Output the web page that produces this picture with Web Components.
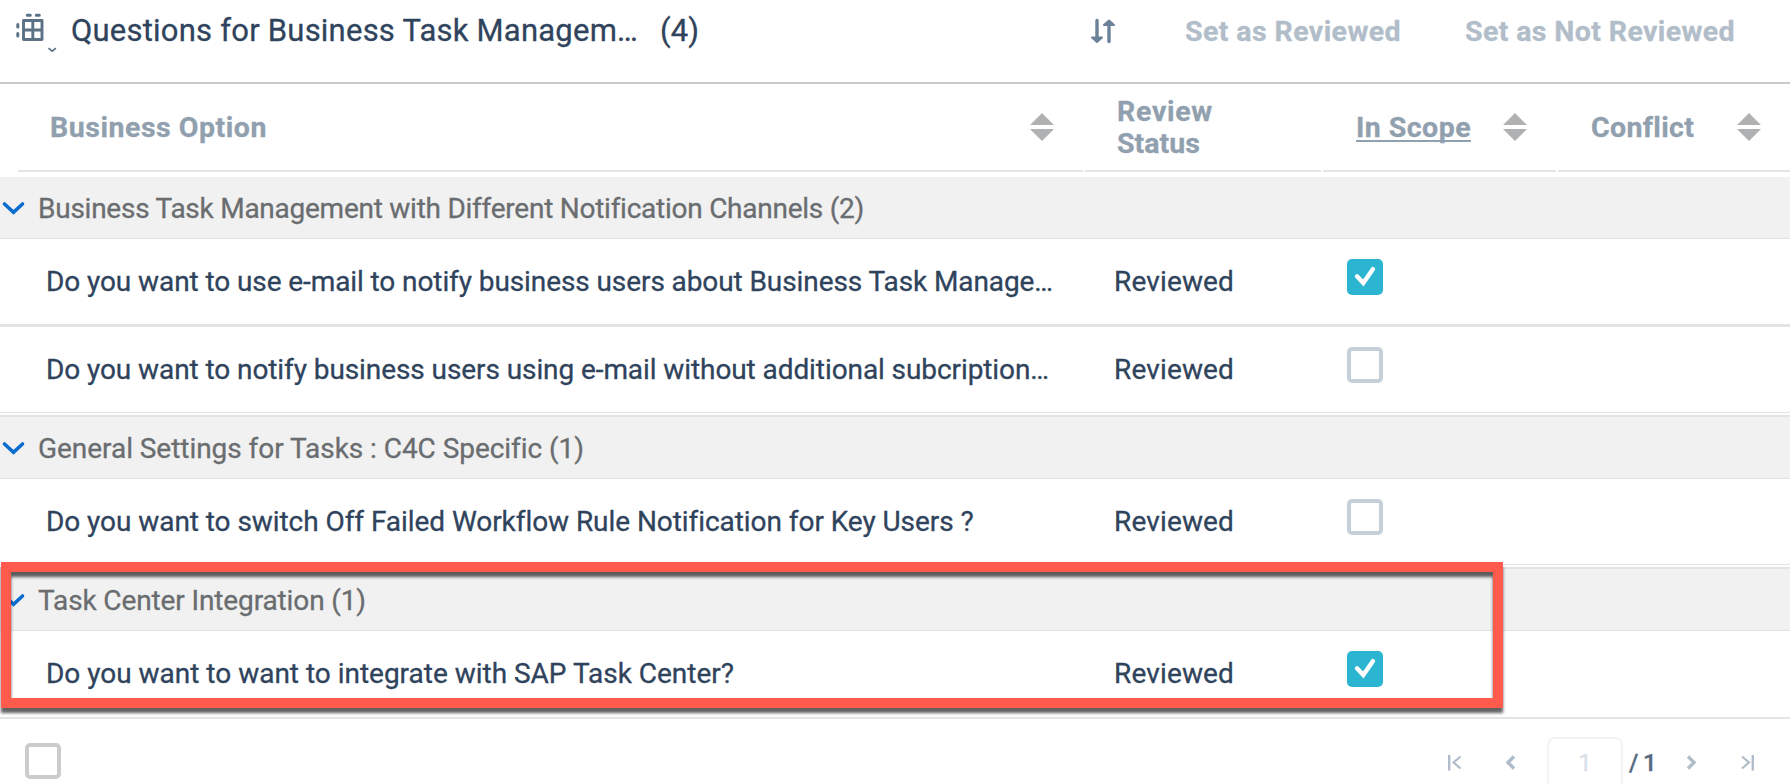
<!DOCTYPE html>
<html lang="en">
<head>
<meta charset="utf-8">
<title>Business Options</title>
<style>
html, body { margin: 0; height: 100%; overflow: hidden; background: #fff; }
body { font-family: Roboto, "Liberation Sans", sans-serif; font-size: 28px; line-height: 32px; color: #2f435c; }
</style>
</head>
<body>
<review-page></review-page>
<script>
const define = (name, html, setup) => customElements.define(name, class extends HTMLElement {
  constructor() {
    super();
    this.attachShadow({ mode: 'open' }).innerHTML = html;
  }
  connectedCallback() { if (setup) setup(this, this.shadowRoot); }
});

/* One line of text tracked out to the width given in its "w" attribute. */
define('fit-text', `<style>
  :host { display: block; white-space: pre; -webkit-text-stroke: .3px currentColor; }
  span { display: inline-block; text-decoration: var(--line, none); text-decoration-thickness: 2px; text-underline-offset: 3px; text-decoration-skip-ink: none; }
</style><span><slot></slot></span>`, (el, root) => {
  const span = root.querySelector('span');
  const n = [...el.textContent].length;
  const natural = span.getBoundingClientRect().width;
  span.style.letterSpacing = ((+el.getAttribute('w') - natural) / n) + 'px';
});

define('check-box', `<style>
  :host { display: block; box-sizing: border-box; width: 36px; height: 36px; border: 4px solid var(--box, #c5d0da); border-radius: 5px; background: #fff; }
  svg { display: none; }
  :host([checked]) { border: 0; background: #2cb5d1; }
  :host([checked]) svg { display: block; }
</style><svg width="36" height="36" viewBox="0 0 36 36"><path d="M10 17.300l6.300 6.700L26 10" fill="none" stroke="#fff" stroke-width="4.400" stroke-linecap="round"/></svg>`);

define('sort-handle', `<style>:host { display: block; width: 24px; height: 28px; } svg { display: block; }</style>
<svg width="24" height="28"><path d="M12 0L24 12H0zM0 16H24L12 28z" fill="#b0b1b2"/></svg>`);

define('title-bar', `<style>
  :host { display: flex; box-sizing: border-box; height: 84px; border-bottom: 2px solid #cacaca; padding-top: 12px; }
  .icon { margin-left: 15px; width: 56px; height: 44px; }
  .title { font-size: 31px; line-height: 37px; width: 589px; color: #2f435c; }
  .count { font-size: 31px; line-height: 37px; width: 431px; }
  .sort { width: 94px; height: 40px; }
  .btn { font-weight: 700; color: #b1bdc9; font-size: 28.5px; width: 280px; line-height: 40px; }
</style>
<svg class="icon" viewBox="15 12 56 44" fill="none" stroke="#5b7186">
  <path d="M23.500 20.500h18.500v19h-18.500zM32.800 20v20M23 30h19" stroke-width="2.900" stroke-linejoin="round"/>
  <path d="M27.300 15.200h3M36.300 15.200h3M17.800 24.500v2.500M17.800 33.500v2.500" stroke-width="3" stroke-linecap="round"/>
  <path d="M48.500 48.200l3.700 3 3.700-3" stroke-width="1.600"/>
</svg>
<fit-text class="title" w="567">Questions for Business Task Managem…</fit-text>
<fit-text class="count" w="39">(4)</fit-text>
<svg class="sort" viewBox="1091 12 94 40" fill="#6b8299" stroke="#6b8299" stroke-linecap="round" stroke-linejoin="round">
  <path d="M1097 20.500V38M1109 25V41.500" stroke-width="3.400" fill="none"/>
  <path d="M1092 37.500h10l-5 4.500zM1104 25h10l-5-4.500z" stroke-width="2"/>
</svg>
<fit-text class="btn" w="216">Set as Reviewed</fit-text>
<fit-text class="btn" w="270">Set as Not Reviewed</fit-text>`);

define('column-head', `<style>
  :host { display: flex; align-items: center; box-sizing: border-box; height: 88px; border-bottom: 2px solid #e5e5e5; color: #91a0ae; font-weight: 700; font-size: 28.500px; }
  .label { flex: 1; padding-top: 2px; }
  sort-handle { margin: 0 29px 0 0; }
  :host([underlined]) { --line: underline; }
  :host([plain]) sort-handle { display: none; }
</style><div class="label"><slot></slot></div><sort-handle></sort-handle>`);

define('group-row', `<style>
  :host { display: flex; align-items: center; box-sizing: border-box; height: 62px; background: #f1f1f1; border-bottom: 1px solid #e2e2e2; color: #6a6d70; }
  :host([ruled]) { height: 64px; border-top: 2px solid #e3e3e3; }
  svg { width: 38px; height: 20px; }
  .name { padding-top: 2px; }
</style><svg viewBox="0 0 38 20"><path d="M4.500 6l9 8.300L22.500 6" fill="none" stroke="#0a6ed1" stroke-width="3.600" stroke-linecap="round" stroke-linejoin="miter"/></svg><div class="name"><slot></slot></div>`);

define('option-row', `<style>
  :host { display: grid; grid-template-columns: 1068px 233px 36px; padding-left: 46px; height: 85px; }
  .t { line-height: 86px; }
  check-box { margin-top: 20px; }
</style><div class="t"><slot></slot></div><fit-text class="t" w="120">Reviewed</fit-text><check-box></check-box>`,
  (el, root) => root.querySelector('check-box').toggleAttribute('checked', el.hasAttribute('in-scope')));

define('page-bar', `<style>
  :host { display: flex; box-sizing: border-box; height: 65px; padding-left: 25px; font-size: 24px; color: #556b82; --box: #ccc; }
  check-box { margin-top: 24px; flex: none; }
  svg { height: 65px; flex: none; }
  .field { box-sizing: border-box; width: 76px; height: 56px; margin-top: 18px; border: 2px solid #f0f4f5; border-radius: 8px; color: #d8dfea; text-align: center; line-height: 48px; -webkit-text-stroke: .3px currentColor; }
  .total { width: 58px; padding-left: 6px; margin-top: 18px; line-height: 52px; box-sizing: border-box; font-weight: 500; }
</style><check-box></check-box>
<svg style="margin-left:1379px;width:107px" viewBox="1440 719 107 65" fill="none" stroke="#b0bcc8"><path d="M1449.200 755v15.500" stroke-width="2.400"/><path d="M1460.500 756.500l-7 6 7 6" stroke-width="2.200"/><path d="M1514 756.500l-6 6 6 6" stroke-width="3.400"/></svg>
<div class="field">1</div><div class="total"><fit-text w="27">/ 1</fit-text></div>
<svg style="width:109px" viewBox="1681 719 109 65" fill="none" stroke="#b0bcc8"><path d="M1688 756.500l6 6-6 6" stroke-width="3.400"/><path d="M1742 756.500l7 6-7 6" stroke-width="2.200"/><path d="M1752.800 755v15.500" stroke-width="2.400"/></svg>`);

define('review-page', `<style>
  :host { display: block; position: relative; width: 1790px; height: 784px; overflow: hidden; }
  .heads { display: grid; grid-template-columns: 1065px 236px 233px 232px; gap: 2px; padding-left: 18px; margin-bottom: 5px; }
  .rule { height: 3px; background: #e4e4e4; }
  .seam { height: 2px; border-top: 1px solid #e2e2e2; background: #fff; }
  .end { height: 2px; margin-top: 1px; background: #e4e4e4; }
  .mark { position: absolute; left: 1px; top: 562px; width: 1482px; height: 126px; border: 10px solid #ff5a4c; filter: drop-shadow(0 5px 1.4px rgba(0,0,0,.62)); }
</style>
<title-bar></title-bar>
<div class="heads">
  <column-head style="padding-left:32px"><fit-text w="217">Business Option</fit-text></column-head>
  <column-head plain style="padding-left:32px"><fit-text w="96">Review</fit-text><fit-text w="83">Status</fit-text></column-head>
  <column-head underlined style="padding-left:33px"><fit-text w="115">In Scope</fit-text></column-head>
  <column-head style="padding-left:33px;--gap:28px"><fit-text w="103">Conflict</fit-text></column-head>
</div>
<group-row><fit-text w="825">Business Task Management with Different Notification Channels (2)</fit-text></group-row>
<option-row in-scope><fit-text w="1007">Do you want to use e-mail to notify business users about Business Task Manage…</fit-text></option-row>
<div class="rule"></div>
<option-row><fit-text w="1003">Do you want to notify business users using e-mail without additional subcription…</fit-text></option-row>
<div class="seam"></div>
<group-row ruled><fit-text w="545">General Settings for Tasks : C4C Specific (1)</fit-text></group-row>
<option-row><fit-text w="926">Do you want to switch Off Failed Workflow Rule Notification for Key Users ?</fit-text></option-row>
<div class="seam"></div>
<group-row ruled><fit-text w="328">Task Center Integration (1)</fit-text></group-row>
<option-row in-scope><fit-text w="688">Do you want to want to integrate with SAP Task Center?</fit-text></option-row>
<div class="end"></div>
<page-bar></page-bar>
<div class="mark"></div>`);
</script>
</body>
</html>
